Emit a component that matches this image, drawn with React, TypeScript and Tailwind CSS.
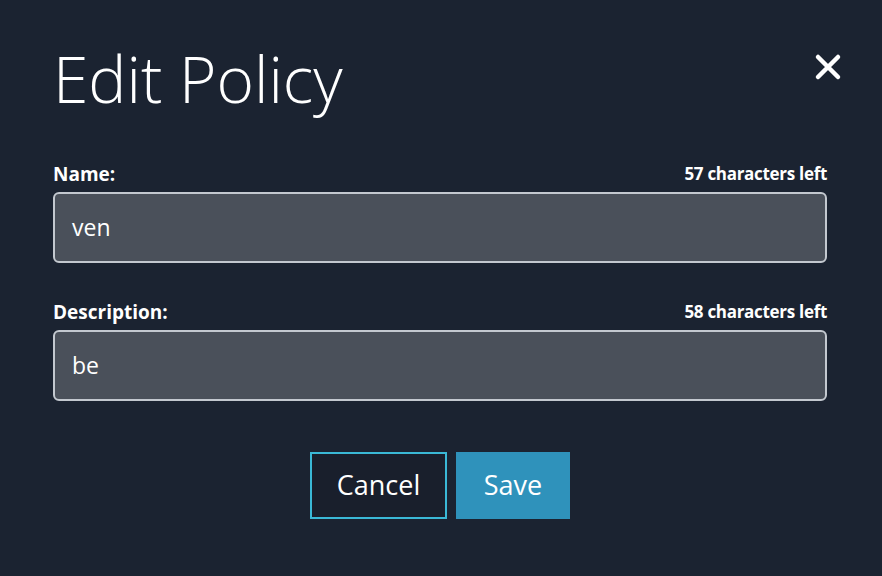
const font = { fontFamily: '"Open Sans", "Noto Sans", sans-serif' };

interface FieldProps {
  label: string;
  left: number;
  value: string;
  className?: string;
}

const Field = ({ label, left, value, className }: FieldProps) => {
  return (
    <div className={className}>
      <div className="flex items-end justify-between h-6 leading-6">
        <span className="text-[19px] font-bold text-white">{label}</span>
        <span className="text-[17px] font-bold text-white tracking-[-0.3px]">
          {left} characters left
        </span>
      </div>
      <div className="mt-[6px] h-[71px] rounded-md border-2 border-[#c3c8cf] bg-[#4a505a] flex items-center pl-[17px]">
        <span className="text-[23px] text-white">{value}</span>
      </div>
    </div>
  );
};

export default function App() {
  return (
    <div
      className="w-[882px] h-[576px] bg-[#1b2331] pl-[53px] pr-[55px] overflow-hidden"
      style={font}
    >
      <div className="flex justify-between items-start pt-[47px]">
        <h1 className="text-[64px] font-light leading-none text-white">
          Edit Policy
        </h1>
        {/* close */}
        <button className="mt-[6px] -mr-[15px] text-white">
          <svg width="28" height="28" viewBox="0 0 28 28" fill="none">
            <path
              d="M4 4L24 24M24 4L4 24"
              stroke="currentColor"
              strokeWidth="4.5"
              strokeLinecap="round"
            />
          </svg>
        </button>
      </div>

      <Field className="mt-[51px]" label="Name:" left={57} value="ven" />
      <Field className="mt-[37px]" label="Description:" left={58} value="be" />

      <div className="flex justify-center gap-[9px] mt-[51px]">
        <button className="w-[137px] h-[67px] border-2 border-[#3ab8d6] bg-[#191f2c] text-[27px] text-white">
          Cancel
        </button>
        <button className="w-[114px] h-[67px] bg-[#2f92bb] text-[27px] text-white">
          Save
        </button>
      </div>
    </div>
  );
}
